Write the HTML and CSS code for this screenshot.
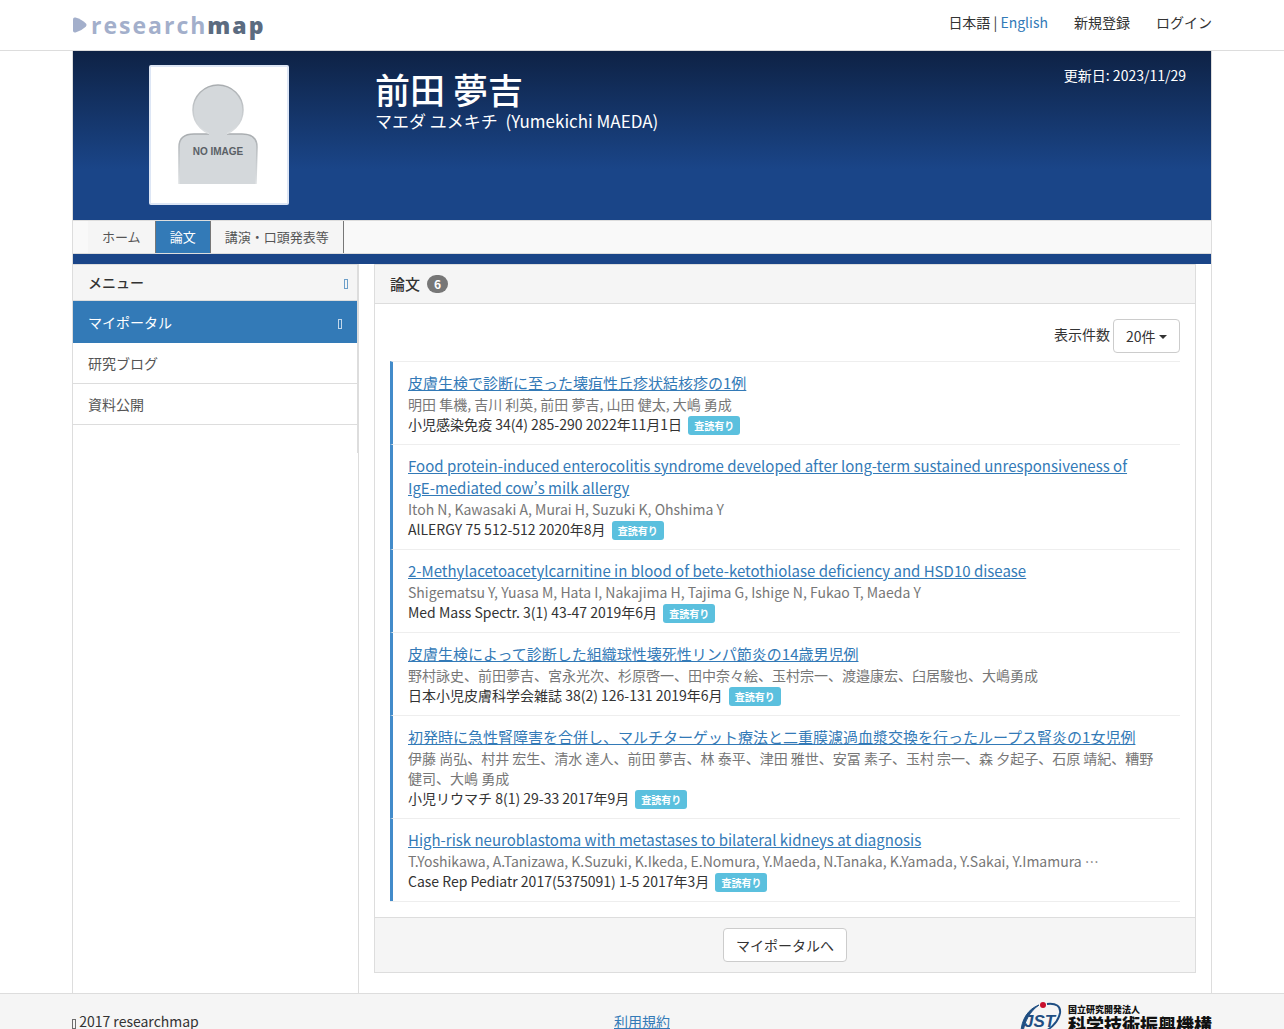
FILE: index.html
```html
<!DOCTYPE html>
<html lang="ja">
<head>
  <meta charset="UTF-8" />
  <meta name="viewport" content="width=device-width, initial-scale=1.0" />
  <title>前田 夢吉 - 論文 - researchmap</title>
  <link rel="stylesheet" href="styles.css">
</head>
<body>
  <header class="site-header">
    <div class="wrap header-inner">
      <a class="brand" href="#">
        <svg class="brand-mark" width="14" height="16" viewBox="0 0 14 16"><path d="M0 2.5Q0 0 2.5 .6Q9 2.5 12.7 6.3Q14.3 8 12.7 9.7Q9 13.500 2.500 15.400Q0 16 0 13.500Z" fill="#a3afcb"/></svg>
        <span class="brand-text">research<b>map</b></span>
      </a>
      <nav class="site-nav">
        <span>日本語 | <a class="lang" href="#">English</a></span>
        <a href="#">新規登録</a>
        <a href="#">ログイン</a>
      </nav>
    </div>
  </header>

  <div class="wrap page">
    <section class="profile">
      <div class="photo-col">
        <div class="photo">
          <svg viewBox="0 0 136 136" role="img" aria-label="NO IMAGE">
            <defs>
              <linearGradient id="rim" x1="0" y1="0" x2="0" y2="1">
                <stop offset="0" stop-color="#a9adb0"/>
                <stop offset="0.5" stop-color="#c4c8cb"/>
                <stop offset="1" stop-color="#dfe2e4"/>
              </linearGradient>
            </defs>
            <path d="M28 117V80Q28 67 43 67H91Q106 67 106 80L105 117" fill="#d4d8db" stroke="url(#rim)" stroke-width="1.5"/>
            <circle cx="67" cy="43" r="25" fill="#d4d8db" stroke="url(#rim)" stroke-width="1.5"/>
            <path d="M58 66H76V71H58Z" fill="#d4d8db"/>
            <text class="photo-text" x="67" y="88" text-anchor="middle">NO IMAGE</text>
          </svg>
        </div>
      </div>
      <div class="name-col">
        <h1>前田 夢吉</h1>
        <p class="kana">マエダ ユメキチ &nbsp;(Yumekichi MAEDA)</p>
      </div>
      <p class="updated">更新日: 2023/11/29</p>
    </section>

    <nav class="tabs">
      <a href="#">ホーム</a>
      <a class="active" href="#">論文</a>
      <a href="#">講演・口頭発表等</a>
    </nav>

    <div class="columns">
      <aside class="sidebar">
        <div class="menu">
          <div class="menu-title">メニュー<a class="glyph" href="#" aria-label="閉じる"></a></div>
          <a class="menu-item active" href="#">マイポータル<span class="glyph"></span></a>
          <a class="menu-item" href="#">研究ブログ</a>
          <a class="menu-item" href="#">資料公開</a>
        </div>
      </aside>

      <main class="content">
        <section class="panel">
          <div class="panel-heading">
            <h2>論文</h2>
            <span class="count">6</span>
          </div>
          <div class="panel-body">
            <div class="toolbar">
              <label for="limit">表示件数</label>
              <div class="limit">
                <select id="limit">
                  <option>20件</option>
                  <option>50件</option>
                  <option>100件</option>
                </select>
              </div>
            </div>
            <ul class="papers">
              <li>
                <a class="title" href="#">皮膚生検で診断に至った壊疽性丘疹状結核疹の1例</a>
                <div class="authors">明田 隼機, 吉川 利英, 前田 夢吉, 山田 健太, 大嶋 勇成</div>
                <div>小児感染免疫 34(4) 285-290 2022年11月1日 <span class="label">査読有り</span></div>
              </li>
              <li>
                <a class="title" href="#">Food protein-induced enterocolitis syndrome developed after long-term sustained unresponsiveness of <span class="keep">IgE-mediated</span> cow’s milk allergy</a>
                <div class="authors">Itoh N, Kawasaki A, Murai H, Suzuki K, Ohshima Y</div>
                <div>AlLERGY 75 512-512 2020年8月 <span class="label">査読有り</span></div>
              </li>
              <li>
                <a class="title" href="#">2-Methylacetoacetylcarnitine in blood of bete-ketothiolase deficiency and HSD10 disease</a>
                <div class="authors">Shigematsu Y, Yuasa M, Hata I, Nakajima H, Tajima G, Ishige N, Fukao T, Maeda Y</div>
                <div>Med Mass Spectr. 3(1) 43-47 2019年6月 <span class="label">査読有り</span></div>
              </li>
              <li>
                <a class="title" href="#">皮膚生検によって診断した組織球性壊死性リンパ節炎の14歳男児例</a>
                <div class="authors">野村詠史、前田夢吉、宮永光次、杉原啓一、田中奈々絵、玉村宗一、渡邉康宏、臼居駿也、大嶋勇成</div>
                <div>日本小児皮膚科学会雑誌 38(2) 126-131 2019年6月 <span class="label">査読有り</span></div>
              </li>
              <li>
                <a class="title" href="#">初発時に急性腎障害を合併し、マルチターゲット療法と二重膜濾過血漿交換を行ったループス腎炎の1女児例</a>
                <div class="authors">伊藤 尚弘、村井 宏生、清水 達人、前田 夢吉、林 泰平、津田 雅世、安冨 素子、玉村 宗一、森 夕起子、石原 靖紀、糟野 健司、大嶋 勇成</div>
                <div>小児リウマチ 8(1) 29-33 2017年9月 <span class="label">査読有り</span></div>
              </li>
              <li>
                <a class="title" href="#">High-risk neuroblastoma with metastases to bilateral kidneys at diagnosis</a>
                <div class="authors">T.Yoshikawa, A.Tanizawa, K.Suzuki, K.Ikeda, E.Nomura, Y.Maeda, N.Tanaka, K.Yamada, Y.Sakai, Y.Imamura …</div>
                <div>Case Rep Pediatr 2017(5375091) 1-5 2017年3月 <span class="label">査読有り</span></div>
              </li>
            </ul>
          </div>
          <div class="panel-footer">
            <a class="btn" href="#">マイポータルへ</a>
          </div>
        </section>
      </main>
    </div>
  </div>

  <footer class="site-footer">
    <div class="wrap footer-inner">
      <span class="copyright"><span class="glyph"></span> 2017 researchmap</span>
      <a class="terms" href="#">利用規約</a>
      <a class="jst" href="#">
        <svg width="44" height="34" viewBox="0 0 44 34">
          <path d="M20 3C9 7 2 18 2 31L4 31C5 20 11 9 20 3Z" fill="#1f4e82" stroke="#1f4e82"/>
          <path d="M28 2C37 1 42 4 41 11C39 21 30 29 19 32" fill="none" stroke="#1f4e82" stroke-width="2"/>
          <circle cx="24" cy="3" r="3" fill="#c8102e"/>
          <text class="jst-mark" x="5" y="25">JST</text>
        </svg>
        <span class="jst-name"><small>国立研究開発法人</small>科学技術振興機構</span>
      </a>
    </div>
  </footer>
</body>
</html>
```
FILE: styles.css
```css
* {
  box-sizing: border-box;
}
body {
  margin: 0;
  font-family: "Noto Sans CJK JP", sans-serif;
  font-size: 14px;
  line-height: 20px;
  color: #333;
  background-color: #fff;
}
a {
  color: #337ab7;
}
h1, h2, p, ul {
  margin: 0;
  padding: 0;
}
.wrap {
  max-width: 1140px;
  margin: 0 auto;
}

/* header */
.site-header {
  border-bottom: 1px solid #ddd;
}
.header-inner {
  display: flex;
  justify-content: space-between;
  height: 50px;
}
.brand {
  display: flex;
  align-items: center;
  gap: 4px;
  padding-left: 1px;
  text-decoration: none;
}
.brand-text {
  font-family: "Open Sans", sans-serif;
  font-size: 23px;
  line-height: 40px;
  font-weight: 700;
  letter-spacing: 2px;
  color: #a3afcb;
}
.brand-text b {
  color: #5b6b80;
}
.site-nav {
  display: flex;
  gap: 26px;
  padding-top: 12px;
}
.site-nav a {
  color: #333;
  text-decoration: none;
}
.site-nav .lang {
  color: #337ab7;
}

/* profile */
.page {
  border: solid #ddd;
  border-width: 0 1px;
}
.profile {
  display: flex;
  padding: 14px 25px 15px 0;
  color: #fff;
  background: linear-gradient(#0e2245, #1a4588 70%);
}
.photo-col {
  flex: 0 0 302px;
  display: flex;
  justify-content: center;
  padding-right: 10px;
}
.photo {
  width: 140px;
  height: 140px;
  border: 2px solid #dde6f5;
  border-radius: 2px;
  background-color: #fff;
}
.photo svg {
  display: block;
}
.photo-text {
  font: bold 10px "Liberation Sans", sans-serif;
  fill: #5a6065;
}
.name-col {
  flex: 1;
}
.name-col h1 {
  padding: 4px 0 2px;
  font-size: 35px;
  line-height: 40px;
  font-weight: 500;
}
.kana {
  font-size: 17px;
}

/* tabs */
.tabs {
  display: flex;
  padding-left: 15px;
  border: solid #ddd;
  border-width: 1px 0;
  background-color: #f9f9f9;
}
.tabs a {
  padding: 6px 14px;
  border-right: 1px solid #777;
  font-size: 13px;
  color: #555;
  background-color: #f5f5f5;
  text-decoration: none;
}
.tabs .active {
  color: #fff;
  background-color: #337ab7;
}

/* columns */
.columns {
  display: grid;
  grid-template-columns: 286px 1fr;
  border-top: 10px solid #1a4588;
}
.sidebar {
  border-right: 1px solid #ddd;
}
.menu {
  padding-bottom: 28px;
  border-top: 1px solid #ddd;
  border-right: 1px solid #ddd;
}
.menu-title,
.menu-item {
  display: flex;
  justify-content: space-between;
  align-items: center;
  padding: 10px 15px;
  border-bottom: 1px solid #ddd;
}
.menu-title {
  padding: 7px 9px 8px 15px;
  font-weight: 500;
  background-color: #f5f5f5;
}
.menu-item {
  color: #555;
  text-decoration: none;
}
.menu-item.active {
  color: #fff;
  border: solid #337ab7;
  border-width: 1px 0;
  background-color: #337ab7;
}
.glyph {
  display: inline-block;
  width: 4px;
  height: 10px;
  margin-top: 3px;
  border: 1px solid currentColor;
  opacity: .7;
}
.content {
  padding: 0 15px 20px;
}

/* panel */
.panel {
  border: 1px solid #ddd;
}
.panel-heading {
  display: flex;
  align-items: center;
  gap: 7px;
  padding: 9px 15px;
  border-bottom: 1px solid #ddd;
  background-color: #f5f5f5;
}
.panel-heading h2 {
  font-size: 15px;
  line-height: 20px;
  font-weight: 500;
}
.count {
  padding: 3px 7px;
  border-radius: 10px;
  font-size: 12px;
  line-height: 12px;
  font-weight: bold;
  color: #fff;
  background-color: #777;
}
.panel-body {
  padding: 15px;
}
.toolbar {
  display: flex;
  justify-content: flex-end;
  gap: 3px;
  margin-bottom: 8px;
}
.toolbar label {
  padding-top: 5px;
}
.limit {
  position: relative;
}
.limit::after {
  content: "";
  position: absolute;
  top: 16px;
  right: 13px;
  border: 4px solid transparent;
  border-top-color: #333;
  border-bottom: 0;
  pointer-events: none;
}
.limit select {
  width: 67px;
  height: 34px;
  padding: 0 12px;
  border: 1px solid #ccc;
  border-radius: 4px;
  font: inherit;
  color: #333;
  background-color: #fff;
  appearance: none;
}
.papers {
  list-style: none;
  border-bottom: 1px solid #eee;
}
.papers li {
  padding: 10px 15px;
  border-top: 1px solid #eee;
  border-left: 3px solid #428bca;
}
.title {
  display: block;
  font-size: 15px;
  line-height: 22px;
}
.keep {
  white-space: nowrap;
}
.authors {
  color: #777;
}
.label {
  margin-left: 3px;
  padding: 2px 6px;
  border-radius: 3px;
  font-size: 10px;
  line-height: 10px;
  font-weight: bold;
  color: #fff;
  background-color: #5bc0de;
}
.panel-footer {
  padding: 10px;
  border-top: 1px solid #ddd;
  text-align: center;
  background-color: #f5f5f5;
}
.btn {
  display: inline-block;
  padding: 6px 12px;
  border: 1px solid #ccc;
  border-radius: 4px;
  color: #333;
  background-color: #fff;
  text-decoration: none;
  vertical-align: top;
}

/* footer */
.site-footer {
  border-top: 1px solid #ddd;
  background-color: #f5f5f5;
}
.footer-inner {
  display: grid;
  grid-template-columns: 1fr auto 1fr;
  padding-top: 8px;
}
.copyright,
.terms {
  padding-top: 9px;
}
.copyright .glyph {
  vertical-align: -2px;
}
.jst {
  display: flex;
  justify-content: flex-end;
  gap: 5px;
  color: #111;
  text-decoration: none;
}
.jst-mark {
  font: italic bold 17px "Liberation Sans", sans-serif;
  fill: #1f4e82;
}
.jst-name {
  padding-top: 3px;
  font-size: 18px;
  line-height: 18px;
  font-weight: 900;
}
.jst-name small {
  display: block;
  font-size: 9px;
  line-height: 10px;
}
```
